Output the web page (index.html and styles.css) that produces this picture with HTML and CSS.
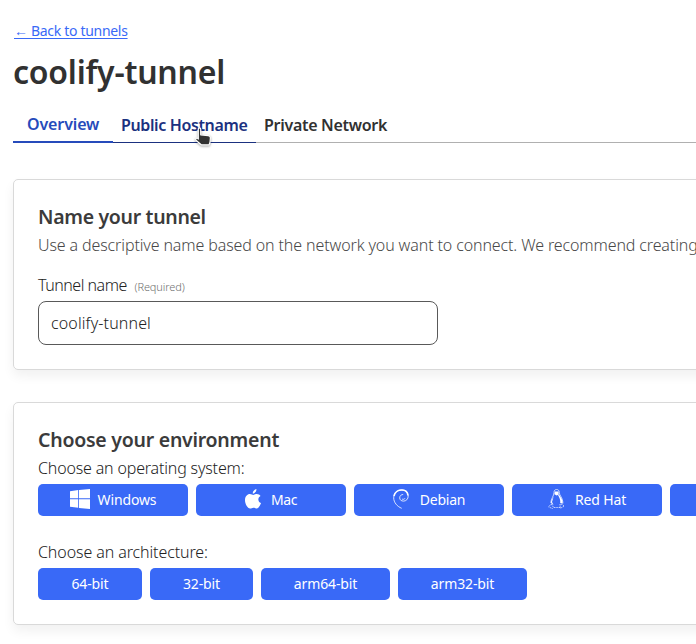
FILE: index.html
```html
<!DOCTYPE html>
<html lang="en">
<head>
<meta charset="utf-8">
<title>coolify-tunnel</title>
<link rel="stylesheet" href="styles.css">
</head>
<body>
<main class="page">
  <a class="back" href="#">← Back to tunnels</a>
  <h1 class="title">coolify-tunnel</h1>
  <nav class="tabs">
    <a class="tab tab-active">Overview</a>
    <a class="tab tab-hover">Public Hostname
      <svg class="cursor" width="20" height="22" viewBox="0 0 20 22"><path d="M4.300 2c0-1.400 2.400-1.400 2.400 0v5.800l7.500.8c1.500.2 2.200.9 2.200 2.200l-.4 4.400-.9 2.600H7.200L2 13.200c-1-1.200.6-2.800 1.700-1.800l.6.6z" fill="#333" stroke="#fff" stroke-width="1.2" stroke-linejoin="round"/></svg>
    </a>
    <a class="tab">Private Network</a>
  </nav>
  <section class="card card-name">
    <h2 class="heading">Name your tunnel</h2>
    <p class="hint">Use a descriptive name based on the network you want to connect. We recommend creating</p>
    <label class="label" for="name">Tunnel name <span class="required">(Required)</span></label>
    <input class="field" id="name" type="text" value="coolify-tunnel">
  </section>
  <section class="card card-env">
    <h2 class="heading heading-env">Choose your environment</h2>
    <p class="prompt prompt-os">Choose an operating system:</p>
    <div class="buttons">
      <button class="btn os"><svg class="icon windows" width="20" height="20" viewBox="0 0 20 20"><path d="M0 2.200 8.200 1v8.300H0zM9 .9 20 0v9.300H9zM0 10.300h8.200v8.500L0 17.700zM9 10.300h11V20L9 18.900z"/></svg><span>Windows</span></button>
      <button class="btn os mac"><svg class="icon" width="16" height="20" viewBox="0 0 16 20"><path d="M11.400.1c.2 2-1.500 4.300-3.600 4.400C7.500 2.400 9.400.4 11.400.1zM8.300 6c.9 0 1.800-1 3.500-1 1.400 0 2.800.7 3.700 1.900-3.200 1.900-2.700 5.900.5 7.100-.8 2.300-2.400 5.400-4.200 5.500-1.200 0-1.700-.8-3.300-.8s-2.100.8-3.300.8C2.600 19.600 0 15 0 11.300 0 7.400 2.400 5.100 4.800 5.100 6.400 5.100 7.600 6 8.300 6z"/></svg><span>Mac</span></button>
      <button class="btn os debian"><svg class="icon swirl" width="16" height="20" viewBox="0 0 16 20"><path class="swirl-thin" d="M8.700 19.300C4.200 17.500.7 13.500.7 8.800.7 4 4 .8 8.700.8c4 0 6.500 2.700 6.500 6.200 0 3-2 5.100-4.700 5.100-2.300 0-3.800-1.300-3.800-3.200 0-2.200 1.700-3.500 3.500-3.400"/><path class="swirl-thick" d="M1 7C2 3 5 1 8.800 1c3.500 0 5.900 2 6.100 5.500"/><path class="swirl-thin" d="M9 10c1.200.7 2.600.2 3-.7"/></svg><span>Debian</span></button>
      <button class="btn os redhat"><svg class="icon tux" width="17" height="20" viewBox="0 0 17 20"><path class="line" d="M6 3.500C6 1.500 7 .5 8.600.5s2.700 1 2.700 3c0 3 3.500 5.400 3.500 9.500v1.500M6 3.500c.1 3.500-3.200 6-3.200 10.500"/><path d="M6.800 2.500h3.800v3L8.700 6.600 6.400 5.300zM11 5.500c1.500 2.500 4 5 3.500 9l-2.300-.4C12.700 11 11.500 9 10 6zM5.700 7.500 4 13l1.500 3c-2-1-2.800-2-2.300-4z"/><path class="dots" d="m3 15 2.600 3.300-1.100 1.200L.6 18zm9 0 .3 4.300 3.900-2.100-1.800-1.800zM6 18.500h6"/></svg><span>Red Hat</span></button>
      <button class="btn os"></button>
    </div>
    <p class="prompt prompt-arch">Choose an architecture:</p>
    <div class="buttons">
      <button class="btn arch a64"><span>64-bit</span></button>
      <button class="btn arch a32"><span>32-bit</span></button>
      <button class="btn arch arm"><span>arm64-bit</span></button>
      <button class="btn arch arm"><span>arm32-bit</span></button>
    </div>
  </section>
</main>
</body>
</html>
```
FILE: styles.css
```css
* { box-sizing: border-box; }
body { margin: 0; overflow: hidden; background: #fff; color: #313131; font-family: "Noto Sans", "Open Sans", sans-serif; font-size: 16px; }
.page { width: 100%; height: 644px; padding: 20px 0 0 13px; overflow: hidden; }
.back { display: block; width: max-content; height: 22px; line-height: 22px; font-size: 14px; letter-spacing: -.31px; color: #3969f7; text-underline-offset: 2px; margin-left: 1px; }
.title { margin: 6px 0 0; height: 48px; line-height: 48px; font-size: 32px; font-weight: 600; letter-spacing: -.24px; }
.tabs { display: flex; height: 47px; border-bottom: 1px solid #b0b0b0; }
.tab { position: relative; height: 47px; padding: 18px 8px 0; line-height: 22px; font-weight: 600; font-size: 16px; letter-spacing: -.29px; white-space: nowrap; border-bottom: 1px solid transparent; }
.tab-active { width: 100px; height: 47px; padding: 17px 0 0 14px; letter-spacing: -.13px; color: #264bbb; border-bottom: 2px solid #264bbb; }
.tab-hover { width: 143px; letter-spacing: -.37px; color: #1b3180; border-bottom-color: #1b3180; }
.cursor { position: absolute; left: 81px; top: 31px; filter: drop-shadow(0 1px 1px rgba(0,0,0,.35)); }
.card { width: 748px; border: 1px solid #d9d9d9; border-radius: 5px; padding: 24px; box-shadow: 0 6px 12px rgba(0,20,10,.06); white-space: nowrap; }
.card-name { margin-top: 36px; height: 191px; }
.card-env { margin-top: 32px; height: 223px; }
.heading { margin: 0; height: 26px; line-height: 26px; font-size: 19.5px; font-weight: 600; letter-spacing: -.32px; color: #3b3b3b; }
.heading-env { letter-spacing: -.25px; }
.hint { margin: 2px 0 0; height: 26px; line-height: 26px; letter-spacing: -.12px; color: #484848; font-weight: 300; }
.label { display: block; margin-top: 15px; height: 24px; line-height: 24px; font-weight: 300; letter-spacing: -.5px; color: #222; }
.required { margin-left: 4px; font-size: 11px; letter-spacing: -.1px; color: #707070; }
.field { display: block; width: 400px; height: 44px; margin-top: 4px; padding: 0 12px; border: 1px solid #595959; border-radius: 8px; font: 300 16px "Noto Sans", sans-serif; letter-spacing: .13px; color: #222; background: #fff; }
.prompt { margin: 0; height: 24px; line-height: 24px; font-weight: 300; letter-spacing: -.17px; color: #222; }
.prompt-os { margin-top: 3px; margin-bottom: 4px; }
.prompt-arch { margin-top: 24px; margin-bottom: 4px; letter-spacing: -.1px; }
.buttons { display: flex; gap: 8px; }
.btn { display: flex; flex: none; align-items: center; justify-content: center; height: 32px; padding: 0; border: 0; border-radius: 5px; background: #3969f7; color: #fff; font: 400 14px "Noto Sans", sans-serif; letter-spacing: -.13px; }
.os { width: 150px; gap: 9px; padding-bottom: 3px; }
.os span { padding-top: 1px; }
.mac { gap: 10px; letter-spacing: -.5px; }
.debian { gap: 11px; letter-spacing: -.2px; }
.redhat { gap: 10px; letter-spacing: -.15px; }
.arch { padding-bottom: 2px; }
.icon { fill: #fff; }
.windows { margin-right: -1px; }
.swirl { fill: none; stroke: #fff; }
.swirl-thin { stroke-width: .8; }
.swirl-thick { stroke-width: 1.5; }
.line, .dots { fill: none; stroke: #fff; stroke-width: .7; }
.dots { stroke-dasharray: 1.5 .8; }
.a64 { width: 104px; }
.a32 { width: 103px; }
.arm { width: 129px; }
```
